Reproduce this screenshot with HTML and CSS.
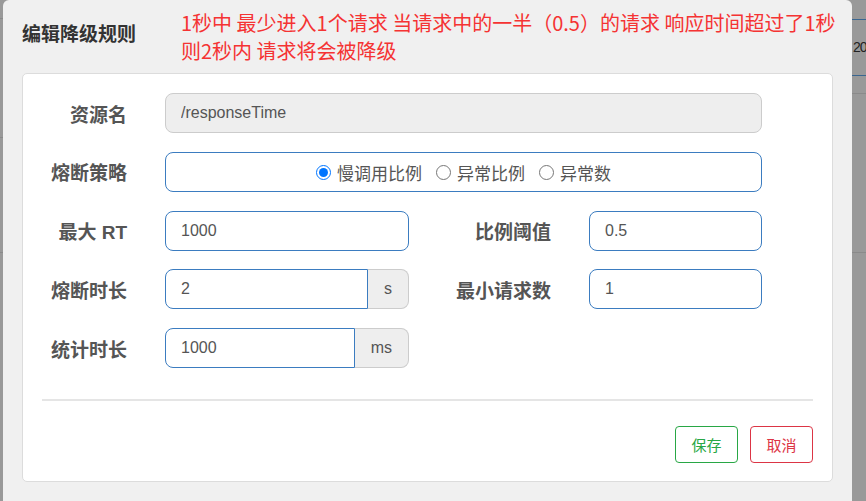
FILE: index.html
```html
<!DOCTYPE html>
<html lang="zh-CN">
<head>
<meta charset="utf-8">
<title>编辑降级规则</title>
<link rel="stylesheet" href="styles.css">
</head>
<body>
<div class="page">
  <div class="side side-left">
    <div class="gap g18"></div><div class="line"></div>
    <div class="gap g118"></div><div class="line"></div>
    <div class="gap g114"></div><div class="line"></div>
  </div>
  <div class="modal">
    <div class="modal-header">
      <h4 class="modal-title">编辑降级规则</h4>
      <p class="hint">1秒中 最少进入1个请求 当请求中的一半（0.5）的请求 响应时间超过了1秒<br>则2秒内 请求将会被降级</p>
    </div>
    <div class="panel">
      <form class="form-grid">
        <label class="lbl">资源名</label>
        <input class="field field-disabled span3" type="text" value="/responseTime" readonly>

        <label class="lbl">熔断策略</label>
        <div class="field radio-box span3">
          <label class="radio"><input type="radio" name="grade" checked><span>慢调用比例</span></label>
          <label class="radio"><input type="radio" name="grade"><span>异常比例</span></label>
          <label class="radio"><input type="radio" name="grade"><span>异常数</span></label>
        </div>

        <label class="lbl">最大 RT</label>
        <input class="field" type="text" value="1000">
        <label class="lbl">比例阈值</label>
        <input class="field" type="text" value="0.5">

        <label class="lbl">熔断时长</label>
        <div class="input-group">
          <input class="field grouped" type="text" value="2">
          <span class="addon">s</span>
        </div>
        <label class="lbl">最小请求数</label>
        <input class="field" type="text" value="1">

        <label class="lbl">统计时长</label>
        <div class="input-group">
          <input class="field grouped" type="text" value="1000">
          <span class="addon">ms</span>
        </div>
      </form>
      <hr class="divider">
      <div class="actions">
        <button class="btn btn-save" type="button">保存</button>
        <button class="btn btn-cancel" type="button">取消</button>
      </div>
    </div>
  </div>
  <div class="side side-right">
    <div class="gap g19"></div><div class="line line-blue"></div>
    <div class="cell">20</div><div class="line line-blue"></div>
    <div class="gap g17"></div><div class="line"></div>
    <div class="gap g158"></div><div class="line"></div>
  </div>
</div>
</body>
</html>
```

FILE: styles.css
```css
* { box-sizing: border-box; }

html, body {
  margin: 0;
  padding: 0;
  height: 501px;
  overflow: hidden;
  background: #999999;
  font-family: "Liberation Sans", "Noto Sans CJK SC", sans-serif;
}

.page {
  display: flex;
  height: 501px;
  width: 866px;
}

.side { display: flex; flex-direction: column; }
.side-left { width: 3px; flex: 0 0 3px; }
.side-right { flex: 0 0 14px; width: 14px; overflow: hidden; }
.line { height: 1px; background: #8a8a8a; }
.line-blue { background: #3a6690; }
.gap.g18 { height: 18px; }
.gap.g118 { height: 118px; }
.gap.g114 { height: 114px; }
.gap.g19 { height: 19px; }
.gap.g17 { height: 17px; }
.gap.g158 { height: 158px; }
.cell {
  height: 55px;
  line-height: 55px;
  padding-left: 1px;
  font-size: 14px;
  letter-spacing: -1px;
  color: #222;
  white-space: nowrap;
}

.modal {
  flex: 0 0 849px;
  width: 849px;
  background: #f0f0f0;
  border-radius: 6px 6px 0 0;
  padding: 0 19px;
  min-height: 501px;
}

.modal-header {
  display: flex;
  align-items: flex-start;
  padding-top: 9px;
  height: 73px;
}

.modal-title {
  flex: 0 0 159px;
  margin: 10px 0 0 0;
  font-family: "Noto Sans CJK SC", sans-serif;
  font-size: 19px;
  line-height: 28px;
  font-weight: 700;
  color: #333;
}

.hint {
  margin: 0;
  font-family: "Noto Sans CJK SC", sans-serif;
  font-size: 20px;
  line-height: 28px;
  color: #f53333;
  white-space: nowrap;
  text-spacing-trim: space-all;
}

.panel {
  background: #fff;
  border: 1px solid #dcdcdc;
  border-radius: 5px;
  padding: 19px 19px 18px 19px;
  height: 409px;
}

.form-grid {
  display: grid;
  grid-template-columns: 85px 244px 104px 173px;
  grid-auto-rows: 40px;
  column-gap: 38px;
  row-gap: 18.75px;
  margin: 0;
}

.lbl {
  align-self: center;
  text-align: right;
  white-space: nowrap;
  font-family: "Liberation Sans", "Noto Sans CJK SC", sans-serif;
  font-size: 19px;
  font-weight: 700;
  color: #555;
}

.span3 { grid-column: 2 / 5; }

.field {
  height: 40px;
  width: 100%;
  border: 1px solid #3b7cc0;
  border-radius: 8px;
  padding: 0 15px;
  font-family: "Liberation Sans", "Noto Sans CJK SC", sans-serif;
  font-size: 16px;
  color: #555;
  background: #fff;
  outline: none;
}

.field-disabled {
  background: #eeeeee;
  border-color: #cccccc;
}

.radio-box {
  display: flex;
  align-items: center;
  justify-content: center;
  gap: 14px;
  padding-top: 2px;
}

.radio {
  display: flex;
  align-items: center;
  gap: 6px;
  font-family: "Noto Sans CJK SC", sans-serif;
  font-size: 17px;
  color: #555;
}

.radio input {
  width: 15px;
  height: 15px;
  margin: 0;
}

.input-group {
  display: flex;
  height: 40px;
}

.field.grouped {
  flex: 1 1 auto;
  min-width: 0;
  border-radius: 8px 0 0 8px;
}

.addon {
  flex: 0 0 auto;
  display: flex;
  align-items: center;
  padding: 0 16px;
  background: #eeeeee;
  border: 1px solid #cccccc;
  border-left: none;
  border-radius: 0 8px 8px 0;
  font-size: 16px;
  color: #555;
}

.divider {
  margin: 31px 0 0 0;
  border: none;
  height: 2px;
  background: #e5e5e5;
}

.actions {
  display: flex;
  justify-content: flex-end;
  gap: 12px;
  margin-top: 25px;
}

.btn {
  width: 63px;
  height: 37px;
  border-radius: 4px;
  background: #fff;
  font-family: "Noto Sans CJK SC", sans-serif;
  font-size: 15px;
  padding: 0;
  cursor: pointer;
}

.btn-save {
  border: 1px solid #28a745;
  color: #28a745;
}

.btn-cancel {
  border: 1px solid #dc3545;
  color: #dc3545;
}
```
